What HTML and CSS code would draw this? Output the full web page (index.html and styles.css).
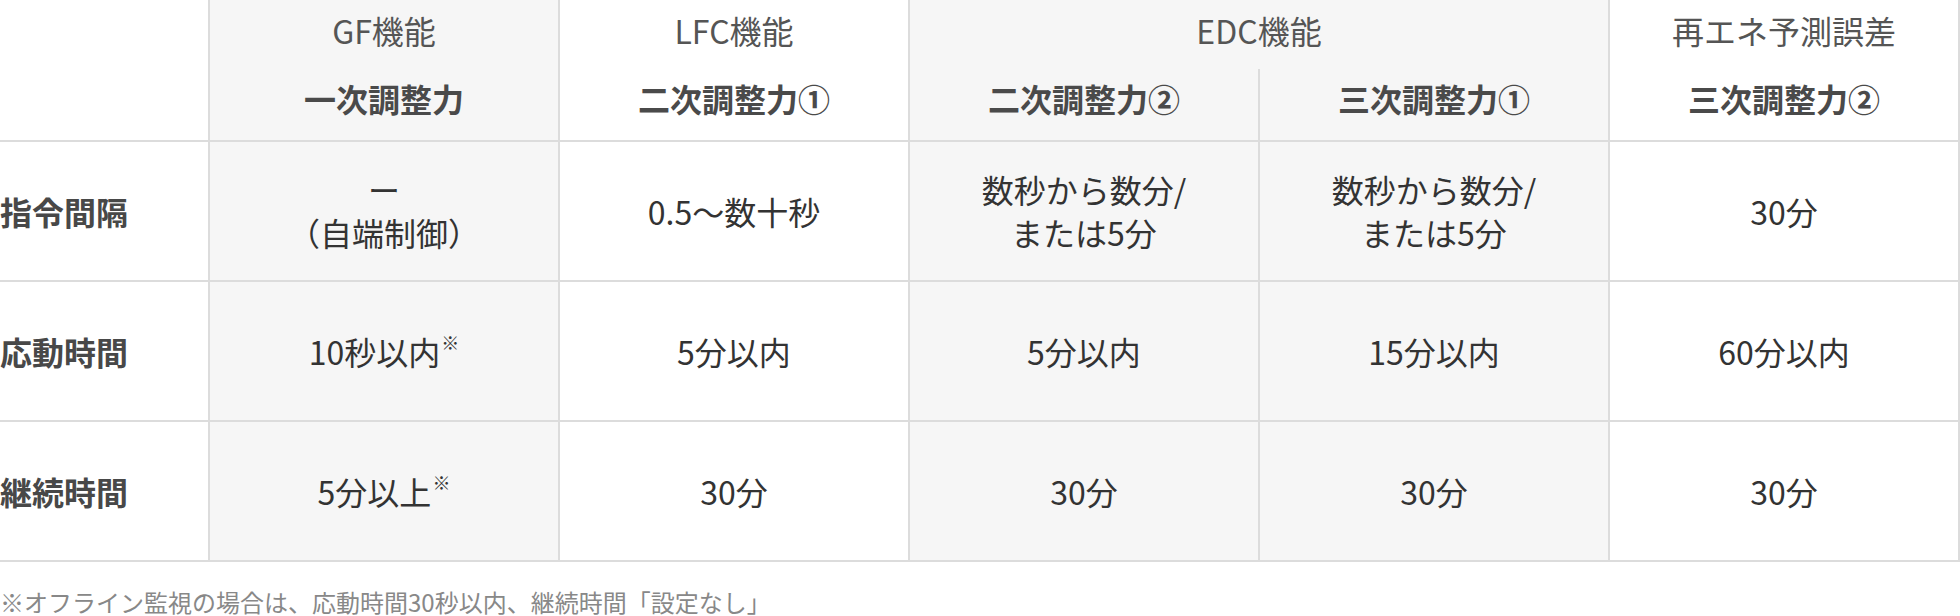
FILE: index.html
```html
<!DOCTYPE html>
<html lang="ja">
<head>
<meta charset="utf-8">
<title>調整力の区分</title>
<link rel="stylesheet" href="styles.css">
</head>
<body>
<table class="spec">
  <colgroup>
    <col class="c-label">
    <col class="c-data">
    <col class="c-data">
    <col class="c-data">
    <col class="c-data">
    <col class="c-data">
  </colgroup>
  <thead>
    <tr class="h-top">
      <th class="label"></th>
      <th class="gray">GF機能</th>
      <th>LFC機能</th>
      <th class="gray" colspan="2">EDC機能</th>
      <th>再エネ予測誤差</th>
    </tr>
    <tr class="h-sub">
      <th class="label"></th>
      <th class="gray">一次調整力</th>
      <th>二次調整力①</th>
      <th class="gray">二次調整力②</th>
      <th class="gray">三次調整力①</th>
      <th>三次調整力②</th>
    </tr>
  </thead>
  <tbody>
    <tr>
      <th class="label">指令間隔</th>
      <td class="gray">ー<br>（自端制御）</td>
      <td>0.5～数十秒</td>
      <td class="gray">数秒から数分/<br>または5分</td>
      <td class="gray">数秒から数分/<br>または5分</td>
      <td>30分</td>
    </tr>
    <tr>
      <th class="label">応動時間</th>
      <td class="gray">10秒以内<sup class="mark">※</sup></td>
      <td>5分以内</td>
      <td class="gray">5分以内</td>
      <td class="gray">15分以内</td>
      <td>60分以内</td>
    </tr>
    <tr>
      <th class="label">継続時間</th>
      <td class="gray">5分以上<sup class="mark">※</sup></td>
      <td>30分</td>
      <td class="gray">30分</td>
      <td class="gray">30分</td>
      <td>30分</td>
    </tr>
  </tbody>
</table>
<p class="note">※オフライン監視の場合は、応動時間30秒以内、継続時間「設定なし」</p>
</body>
</html>
```
FILE: styles.css
```css
html, body {
  margin: 0;
  padding: 0;
  background: #ffffff;
}

body {
  font-family: "Noto Sans CJK JP", "Noto Sans", sans-serif;
  color: #333333;
}

.spec {
  width: 1960px;
  table-layout: fixed;
  border-collapse: collapse;
  border-spacing: 0;
}

.c-label { width: 209px; }
.c-data { width: 350px; }

.spec th,
.spec td {
  padding: 0;
  text-align: center;
  vertical-align: middle;
  border: 2px solid #dcdcdc;
  font-size: 32px;
  line-height: 43px;
}

.spec .gray {
  background: #f6f6f6;
}

.h-top th {
  border-top: none;
  border-bottom: none;
  font-weight: 400;
  color: #555555;
  padding: 9px 0 17px;
}

.h-sub th {
  border-top: none;
  font-weight: 700;
  color: #4a4a4a;
  padding: 8px 0 20px;
}

.spec .label {
  text-align: left;
  border-left: none;
  font-weight: 700;
  color: #484848;
  background: #ffffff;
}

tbody td,
tbody th {
  height: 138px;
}

tbody td {
  font-weight: 400;
  color: #333333;
}

.mark {
  font-size: 18px;
  line-height: 0;
  vertical-align: 15px;
  margin-left: 1px;
}

.note {
  margin: 25px 0 0 0;
  font-size: 24px;
  line-height: 30px;
  color: #888888;
}
```
